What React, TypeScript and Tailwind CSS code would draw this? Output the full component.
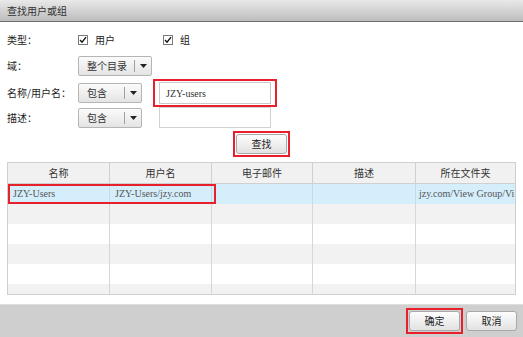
const cjk = "font-['Noto_Sans_CJK_SC',sans-serif]";
const serif = "font-['Liberation_Serif','Noto_Sans_CJK_SC',serif]";

function Check({ label, className = "" }: { label: string; className?: string }) {
  return (
    <div className={`flex items-center gap-[7px] ${className}`}>
      <span className="flex h-[10px] w-[10px] items-center justify-center border border-[#7a7a7a] bg-white">
        <svg viewBox="0 0 10 10" className="h-[8px] w-[8px]">
          <path d="M1.3 5 L3.8 7.8 L8.8 1.4" fill="none" stroke="#111" strokeWidth="1.7" />
        </svg>
      </span>
      <span className="whitespace-nowrap text-[10px] leading-none text-[#222]">{label}</span>
    </div>
  );
}

function Select({ value, width }: { value: string; width: string }) {
  return (
    <div
      className={`flex h-[20px] ${width} shrink-0 items-stretch rounded-[2px] border border-[#b5b5b5] bg-gradient-to-b from-[#fbfbfb] to-[#e4e4e4]`}
    >
      <span className="flex flex-1 items-center whitespace-nowrap pl-[8px] text-[10px] leading-none text-[#333]">
        {value}
      </span>
      <span className="my-[3px] w-px bg-[#a0a0a0]" />
      <span className="flex w-[16px] items-center justify-center">
        <svg viewBox="0 0 7 4" className="h-[4px] w-[7px]">
          <path d="M0 0 H7 L3.5 4 Z" fill="#222" />
        </svg>
      </span>
    </div>
  );
}

function Button({ label, red }: { label: string; red?: boolean }) {
  const btn = (
    <div className="flex h-[20px] w-[51px] items-center justify-center rounded-[3px] border border-[#a9a9a9] bg-gradient-to-b from-[#fdfdfd] to-[#e2e2e2] text-[10px] leading-none text-[#222]">
      {label}
    </div>
  );
  if (!red) return btn;
  return <div className="border-2 border-[#e8202a] p-[1px]">{btn}</div>;
}

const cols = ["名称", "用户名", "电子邮件", "描述", "所在文件夹"];
const label = "w-[71px] shrink-0 whitespace-nowrap text-[10px] leading-none text-[#222]";

export default function App() {
  return (
    <div className={`flex h-[337px] w-[523px] flex-col overflow-hidden bg-white ${cjk}`}>
      <div className="flex h-[22px] items-center border-b border-[#6e6e6e] bg-gradient-to-b from-[#e9e9e9] to-[#bdbdbd] pl-[7px] text-[10px] leading-none text-[#333]">
        查找用户或组
      </div>

      <div className="flex flex-col pl-[7px] pt-[12px]">
        <div className="flex h-[12px] items-center">
          <span className={label}>类型：</span>
          <Check label="用户" />
          <Check label="组" className="ml-[48px]" />
        </div>

        <div className="mt-[9px] flex h-[21px] items-center">
          <span className={label}>域：</span>
          <Select value="整个目录" width="w-[74px]" />
        </div>

        <div className="mt-[3px] flex items-center">
          <span className={label}>名称/用户名：</span>
          <Select value="包含" width="w-[64px]" />
          <div className="ml-[11px] border-2 border-[#e8202a] px-[4px] py-[1px]">
            <div className={`flex h-[22px] w-[112px] items-center border border-[#c9c9c9] pl-[6px] text-[10px] text-[#333] ${serif}`}>
              JZY-users
            </div>
          </div>
        </div>

        <div className="flex items-center">
          <span className={label}>描述：</span>
          <Select value="包含" width="w-[64px]" />
          <div className="ml-[17px] h-[21px] w-[112px] border border-[#d2d2d2]" />
        </div>

        <div className="mt-[3px] flex pl-[226px]">
          <Button label="查找" red />
        </div>
      </div>

      <div className="mx-[7px] mt-[5px] border border-[#cfcfcf] text-[10px] leading-none">
        <div className="grid grid-cols-[102px_102px_101px_103px_1fr] bg-[#f1f1f1]">
          {cols.map((c, i) => (
            <div
              key={c}
              className={`flex h-[21px] items-center justify-center border-b border-[#d0d0d0] text-[#333] ${i < 4 ? "border-r" : ""}`}
            >
              {c}
            </div>
          ))}
        </div>
        <div className="relative grid h-[20px] grid-cols-[102px_102px_101px_103px_1fr] bg-[#d5eefb] text-[#555]">
          <div className={`flex items-center border-r border-[#c4dce8] pl-[5px] ${serif}`}>JZY-Users</div>
          <div className={`flex items-center border-r border-[#c4dce8] pl-[5px] ${serif}`}>JZY-Users/jzy.com</div>
          <div className="border-r border-[#c4dce8]" />
          <div className="border-r border-[#c4dce8]" />
          <div className={`flex items-center overflow-hidden whitespace-nowrap pl-[3px] ${serif}`}>jzy.com/View Group/Vi</div>
          <div className="absolute left-0 top-0 h-[20px] w-[208px] border-2 border-[#e8202a]" />
        </div>
        {["bg-[#f2f2f2]", "bg-white", "bg-[#f2f2f2]", "bg-white", "bg-[#f2f2f2]"].map((bg, r) => (
          <div
            key={r}
            className={`grid ${r === 4 ? "h-[10px]" : "h-[20px]"} grid-cols-[102px_102px_101px_103px_1fr] ${bg}`}
          >
            {[0, 1, 2, 3, 4].map((i) => (
              <div key={i} className={i < 4 ? "border-r border-[#d6d6d6]" : ""} />
            ))}
          </div>
        ))}
      </div>

      <div className="mt-auto flex h-[33px] items-center justify-end gap-[3px] border-t border-[#dedede] bg-[#cfcfcf] pr-[6px]">
        <Button label="确定" red />
        <Button label="取消" />
      </div>
    </div>
  );
}
